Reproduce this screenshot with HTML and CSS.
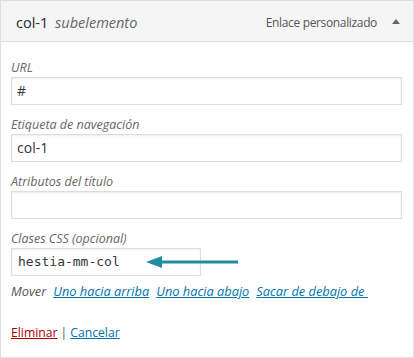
FILE: index.html
```html
<!DOCTYPE html>
<html lang="es">
<head>
<meta charset="utf-8">
<title>Menu item</title>
<link rel="stylesheet" href="styles.css">
</head>
<body>
<div class="item">
  <div class="handle">
    <span class="title">col-1 <span class="sub">subelemento</span></span>
    <span class="controls">
      <span class="type">Enlace personalizado</span>
      <span class="toggle"></span>
    </span>
  </div>
  <div class="settings">
    <div class="field">
      <label class="label">URL</label>
      <div class="input">#</div>
    </div>
    <div class="field">
      <label class="label">Etiqueta de navegación</label>
      <div class="input">col-1</div>
    </div>
    <div class="field">
      <label class="label">Atributos del título</label>
      <div class="input"></div>
    </div>
    <div class="field">
      <label class="label">Clases CSS (opcional)</label>
      <div class="css-row">
        <div class="input input-short mono">hestia-mm-col</div>
        <svg class="arrow" width="92" height="12" viewBox="0 0 92 12"><polygon points="0,6 16,0 16,12" fill="#1f8ea0"/><rect x="14" y="4.5" width="78" height="3" fill="#1f8ea0"/></svg>
      </div>
    </div>
    <div class="move">
      <span class="move-label">Mover</span>
      <a class="link" href="#">Uno hacia arriba</a>
      <a class="link" href="#">Uno hacia abajo</a>
      <a class="link" href="#">Sacar de debajo de&nbsp;</a>
    </div>
    <div class="actions">
      <a class="delete" href="#">Eliminar</a><span class="sep">|</span><a class="cancel" href="#">Cancelar</a>
    </div>
  </div>
</div>
</body>
</html>
```
FILE: styles.css
```css
* { box-sizing: border-box; }
body {
  margin: 0;
  font-family: "Open Sans", "Noto Sans", sans-serif;
  font-size: 13px;
  color: #23282d;
  background: #fff;
}
.item {
  width: 414px;
  height: 358px;
  border: 1px solid #dfdfdf;
}
.handle {
  height: 41px;
  background: #f5f5f5;
  border-bottom: 1px solid #dfdfdf;
  display: flex;
  align-items: center;
  justify-content: space-between;
  padding: 3px 13px 0 15px;
}
.title {
  font-size: 14.5px;
  font-weight: 500;
  color: #23282d;
}
.sub {
  font-size: 14.5px;
  font-weight: 400;
  font-style: italic;
  color: #666;
  margin-left: 3px;
}
.controls {
  display: flex;
  align-items: center;
  gap: 15px;
}
.type {
  color: #555;
  font-size: 12px;
  letter-spacing: -0.35px;
}
.toggle {
  width: 0; height: 0;
  border-left: 4px solid transparent;
  border-right: 4px solid transparent;
  border-bottom: 5px solid #666;
  margin-bottom: 3px;
}
.settings {
  padding: 17px 11px 0 10px;
}
.field { margin-bottom: 11px; }
.label {
  display: block;
  font-style: italic;
  font-size: 12.5px;
  color: #666;
  line-height: 18px;
}
.input {
  height: 28px;
  border: 1px solid #ddd;
  box-shadow: inset 0 1px 2px rgba(0,0,0,0.07);
  padding: 0 5px;
  font-size: 14px;
  line-height: 26px;
  color: #32373c;
}
.css-row {
  display: flex;
  align-items: center;
}
.input-short { width: 190px; }
.mono {
  font-family: "DejaVu Sans Mono", "Liberation Mono", monospace;
  font-size: 13px;
  padding-left: 6px;
}
.arrow { margin-left: -55px; }
.move {
  margin-top: -5px;
  line-height: 18px;
  display: flex;
  gap: 7px;
  font-style: italic;
  font-size: 12.8px;
}
.move-label { color: #555; }
.link { color: #0073aa; text-decoration: underline; }
.actions {
  margin-top: 24px;
  line-height: 18px;
  font-size: 12.2px;
}
.delete { color: #a00; }
.sep { color: #555; margin: 0 3px; }
.cancel { color: #0073aa; }
```
